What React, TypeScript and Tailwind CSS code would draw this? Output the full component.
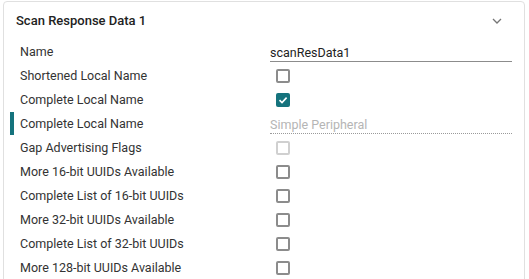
import React from "react";

interface IRow {
  id: number;
  label: string;
  kind: "input" | "check" | "checked" | "disabledCheck" | "readonly";
  value?: string;
  active?: boolean;
}

const rows: IRow[] = [
  { id: 1, label: "Name", kind: "input", value: "scanResData1" },
  { id: 2, label: "Shortened Local Name", kind: "check" },
  { id: 3, label: "Complete Local Name", kind: "checked" },
  { id: 4, label: "Complete Local Name", kind: "readonly", value: "Simple Peripheral", active: true },
  { id: 5, label: "Gap Advertising Flags", kind: "disabledCheck" },
  { id: 6, label: "More 16-bit UUIDs Available", kind: "check" },
  { id: 7, label: "Complete List of 16-bit UUIDs", kind: "check" },
  { id: 8, label: "More 32-bit UUIDs Available", kind: "check" },
  { id: 9, label: "Complete List of 32-bit UUIDs", kind: "check" },
  { id: 10, label: "More 128-bit UUIDs Available", kind: "check" },
];

const Box: React.FC<{ variant: IRow["kind"] }> = ({ variant }) => {
  if (variant === "checked") {
    return (
      <div className="w-[14px] h-[14px] rounded-[2px] bg-[#15737d] flex items-center justify-center">
        <svg width="10" height="10" viewBox="0 0 10 10">
          <path d="M1.5 5.2 L4 7.6 L8.6 2.6" stroke="#fff" strokeWidth="1.6" fill="none" />
        </svg>
      </div>
    );
  }
  const border = variant === "disabledCheck" ? "border-[#d0d0d0]" : "border-[#8c8c8c]";
  return <div className={`w-[14px] h-[14px] rounded-[2px] border-2 ${border}`} />;
};

const App: React.FC = () => {
  const renderRows = rows.map((row) => (
    <div key={row.id} className="relative flex items-center h-[24px]">
      {row.active && <div className="absolute left-[6px] top-[0px] w-[4px] h-[23px] bg-[#15737d]" />}
      <div className="w-[266px] pl-[16px] text-[12.5px] text-[#333]">{row.label}</div>
      <div className="w-[242px] flex items-center h-full">
        {row.kind === "input" && (
          <div className="w-full border-b border-[#8c8c8c] text-[12.5px] text-[#222] leading-[16px] mt-[2px]">
            {row.value}
          </div>
        )}
        {row.kind === "readonly" && (
          <div className="w-full border-b border-dotted border-[#9a9a9a] text-[12.5px] text-[#b5b5b5] leading-[16px] mt-[2px]">
            {row.value}
          </div>
        )}
        {(row.kind === "check" || row.kind === "checked" || row.kind === "disabledCheck") && (
          <div className="pl-[6px]">
            <Box variant={row.kind} />
          </div>
        )}
      </div>
    </div>
  ));

  return (
    <div className="w-[529px] h-[279px] bg-white overflow-hidden pt-[1px] pl-[3px] font-['Roboto',sans-serif]">
      <div className="w-[522px] h-[300px] border border-[#e0e0e0] rounded-t-[4px]">
        <div className="flex items-center justify-between h-[38px] pl-[12px] pr-[22px]">
          <div className="text-[13px] font-medium text-[#222] mb-[1px]">Scan Response Data 1</div>
          <svg width="10" height="6" viewBox="0 0 10 6">
            <path d="M1 1 L5 5 L9 1" stroke="#757575" strokeWidth="1.3" fill="none" />
          </svg>
        </div>
        <div className="flex flex-col">{renderRows}</div>
      </div>
    </div>
  );
};

export default App;
